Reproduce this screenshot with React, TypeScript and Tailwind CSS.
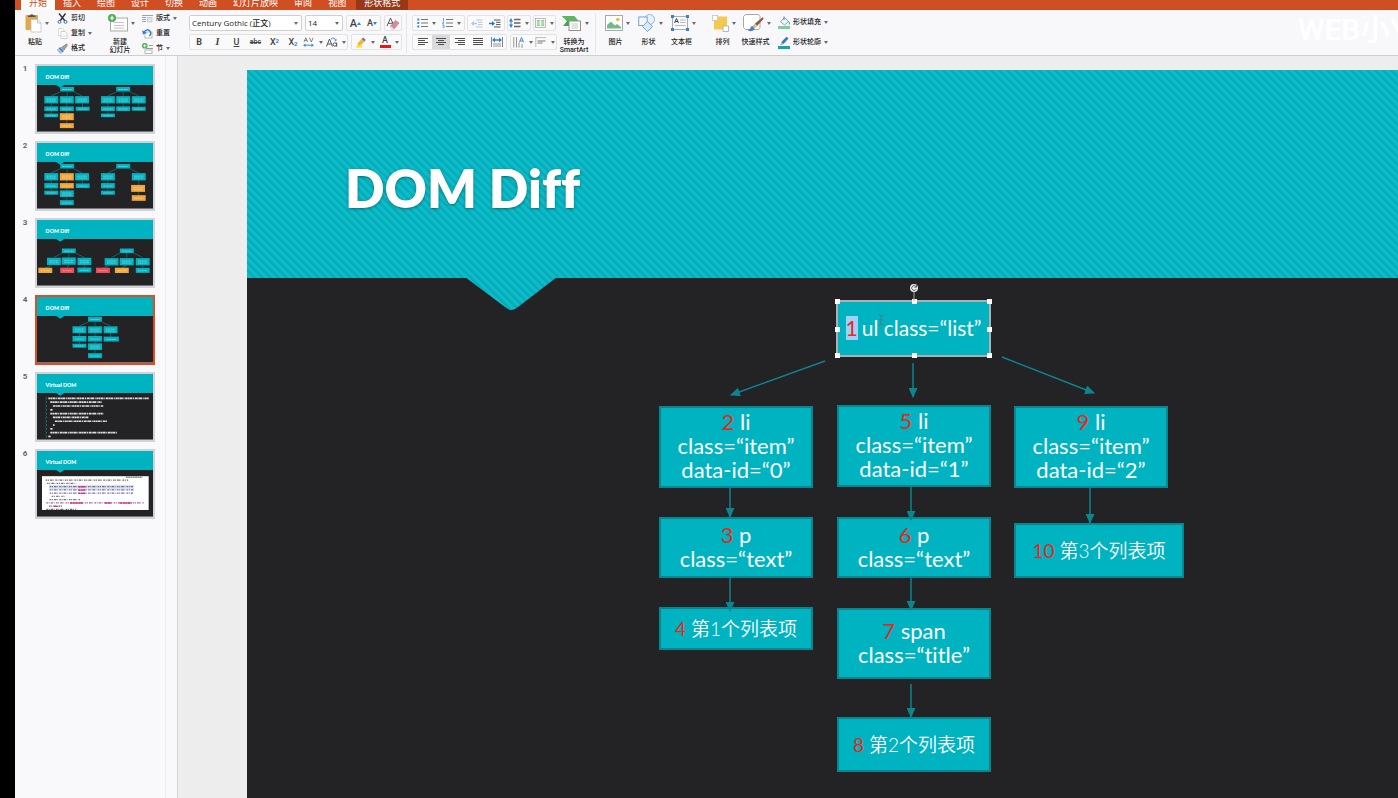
import type { ReactNode } from "react";

const TEAL = "#00b3c1";
const EDGE = "#0b858e";

function Caret({ className = "" }: { className?: string }) {
  return (
    <svg viewBox="0 0 4 3" className={"h-[3px] w-1 shrink-0 " + className} aria-hidden="true">
      <path d="M0 0h4L2 3z" fill="#6b6b6b" />
    </svg>
  );
}

function Icon({ w, h, children }: { w: number; h: number; children: ReactNode }) {
  return (
    <svg width={w} height={h} viewBox={`0 0 ${w} ${h}`} fill="none" className="shrink-0" aria-hidden="true">
      {children}
    </svg>
  );
}

/* ---------- ribbon icons ---------- */

const PasteIcon = () => (
  <Icon w={17} h={20}>
    <rect x="0.5" y="2" width="12.5" height="15" rx="1" fill="#e0a94f" />
    <path d="M3 4V2.500h2A2 2 0 0 1 8.600 2.500h2V4z" fill="#555" />
    <path d="M6 6.500h6.500L16 10v9H6z" fill="#fff" stroke="#bbb" strokeWidth=".7" />
    <path d="M12.500 6.500V10H16" stroke="#aaa" strokeWidth=".7" />
  </Icon>
);
const CutIcon = () => (
  <Icon w={11} h={11}>
    <path d="M2 0.500 8 8M8.500 0.500 3 8" stroke="#333" strokeWidth="1.400" />
    <circle cx="2.500" cy="8.800" r="1.500" stroke="#3a6fae" />
    <circle cx="8.500" cy="8.800" r="1.500" stroke="#3a6fae" />
  </Icon>
);
const CopyIcon = () => (
  <Icon w={11} h={11}>
    <path d="M1.500.5h4L7 2v5.500H1.500z" fill="#fff" stroke="#c9c9c9" strokeWidth=".7" />
    <path d="M4 3.500h4l2 2v5H4z" fill="#fff" stroke="#bdbdbd" strokeWidth=".7" />
    <path d="M5.500 7h3M5.500 8.500h3" stroke="#ccc" strokeWidth=".6" />
  </Icon>
);
const BrushIcon = () => (
  <Icon w={11} h={11}>
    <path d="M1 5.500 5 9.500 4 11C2 10.500.5 8.500 0 6.500z" fill="#9ec3e6" />
    <path d="M3 4 7 8 5.300 9.500 1.500 5.500z" fill="#4f86bd" />
    <path d="M4.500 4.500 7 7 10.500 2 9.500 1z" fill="#a6a6a6" stroke="#666" strokeWidth=".6" />
  </Icon>
);
const NewSlideIcon = () => (
  <Icon w={20} h={19}>
    <rect x="2.500" y="4" width="17" height="13" fill="#fff" stroke="#a9a9a9" />
    <path d="M6 8.500h10M6 11.500h10M6 14h10" stroke="#c4c4c4" />
    <circle cx="4" cy="4" r="4" fill="#4caf50" />
    <path d="M4 1.800v4.400M1.800 4h4.400" stroke="#fff" strokeWidth="1.200" />
  </Icon>
);
const LayoutIcon = () => (
  <Icon w={11} h={9}>
    <path d="M0 1.500h11M0 3.500h4M0 5.500h4M0 7.500h4" stroke="#9aa3ad" />
    <rect x="5.500" y="3.500" width="4.500" height="4.500" fill="#dfe5ec" stroke="#b9c2cc" strokeWidth=".7" />
  </Icon>
);
const ResetIcon = () => (
  <Icon w={11} h={11}>
    <rect x="3" y="4" width="7" height="6" fill="#fff" stroke="#aaa" strokeWidth=".8" />
    <path d="M2 4.500C3 1.500 7 .5 8.500 4c.6 1.600 0 3-1.200 4" stroke="#2f80c8" strokeWidth="1.300" />
    <path d="M0 2.200 1 6.500 5 5z" fill="#2f80c8" />
  </Icon>
);
const SectionIcon = () => (
  <Icon w={11} h={11}>
    <path d="M7 2.500h4M4 5.500h7" stroke="#999" />
    <rect x="3" y="7" width="7" height="3.500" fill="#fff" stroke="#999" strokeWidth=".7" />
    <circle cx="2.800" cy="2.800" r="2.800" fill="#4caf50" />
    <path d="M2.800 1.200v3.200M1.200 2.800h3.200" stroke="#fff" strokeWidth=".9" />
  </Icon>
);
const EraserIcon = () => (
  <Icon w={14} h={13}>
    <path d="M1 9 4.500 1 8 9M2.200 6.300h4.600" stroke="#555" />
    <path d="M4.500 9 9.500 3.500 13 6 8 12H5.500z" fill="#d98a9b" stroke="#b8687a" strokeWidth=".6" />
    <path d="M4.500 9 8 12H5.500z" fill="#fff" />
  </Icon>
);
const SpacingIcon = () => (
  <Icon w={12} h={10}>
    <path d="M1 5 2.800.8 4.600 5M1.700 3.500h2.200M6.500.8 8.300 5l1.800-4.200" stroke="#666" strokeWidth=".8" />
    <path d="M1.500 8.200h8" stroke="#3b8ad8" />
    <path d="M0 8.200 2.500 6.500v3.400zM11 8.200 8.500 6.500v3.400z" fill="#3b8ad8" />
  </Icon>
);
const CaseIcon = () => (
  <Icon w={12} h={11}>
    <path d="M.5 9.500 3.500 2 6.500 9.500M1.500 7h4" stroke="#555" />
    <circle cx="8.800" cy="7.500" r="1.700" stroke="#555" />
    <path d="M10.700 5.500v4.200" stroke="#555" />
    <path d="M5 2.200C6.500.6 8.500.8 9.500 2.500" stroke="#3b8ad8" />
    <path d="M8 2.500h3L9.800 4.600z" fill="#3b8ad8" />
  </Icon>
);
const HighlightIcon = () => (
  <Icon w={12} h={11}>
    <path d="M1 9.500h6" stroke="#ffe04d" strokeWidth="2.500" />
    <path d="M2.500 6.500 6.500 2 9.500 4.500 5.500 8.500 3 8.500z" fill="#f0b63c" />
    <path d="M6.500 2 8.300.6 10.700 3 9.500 4.500z" fill="#777" />
  </Icon>
);

function ListIcon({ numbered = false }: { numbered?: boolean }) {
  return (
    <Icon w={11} h={10}>
      <path d="M4 1.500h7M4 5h7M4 8.500h7" stroke="#777" />
      {numbered ? (
        <path d="M1.500 0v3M.5 4h1.500L.5 6H2M.5 7.300H2v2.400H.5" stroke="#3b8ad8" strokeWidth=".8" />
      ) : (
        <path d="M.3 1.500h2M.3 5h2M.3 8.500h2" stroke="#3b8ad8" strokeWidth="1.800" />
      )}
    </Icon>
  );
}
function IndentIcon({ out = false }: { out?: boolean }) {
  return (
    <Icon w={12} h={9}>
      <path d="M5 1h6.500M7 3.300h4.500M7 5.600h4.500M5 8h6.500" stroke={out ? "#bcc4cc" : "#555"} />
      {out ? (
        <path d="M0 4.500 3 2v1.800h3v1.400H3V7z" fill="#a9cbec" />
      ) : (
        <path d="M6 4.500 3 2v1.800H0v1.400h3V7z" fill="#2478cc" />
      )}
    </Icon>
  );
}
const LineSpacingIcon = () => (
  <Icon w={12} h={10}>
    <path d="M5 1.500h6.500M5 5h6.500M5 8.500h6.500" stroke="#666" strokeWidth="1.300" />
    <path d="M2 2v6" stroke="#2f80d0" />
    <path d="M0 3.500 2 0l2 3.500zM0 6.500 2 10l2-3.500z" fill="#2f80d0" />
  </Icon>
);
const ColumnsIcon = () => (
  <Icon w={11} h={10}>
    <rect x=".5" y=".5" width="10" height="9" fill="#fff" stroke="#aaa" strokeWidth=".8" />
    <path d="M1.800 2.800h3M1.800 5h3M1.800 7.200h3M6.200 2.800h3M6.200 5h3M6.200 7.200h3" stroke="#5cb85c" strokeWidth="1.200" />
  </Icon>
);
function AlignIcon({ d }: { d: string }) {
  return (
    <Icon w={10} h={8}>
      <path d={d} stroke="#4d4d4d" strokeWidth="1" shapeRendering="crispEdges" />
    </Icon>
  );
}
const DistributeIcon = () => (
  <Icon w={12} h={10}>
    <path d="M.5 0v10M11.500 0v10" stroke="#888" />
    <path d="M2 7h8M2 9h8" stroke="#999" />
    <path d="M2 3h8" stroke="#2f80d0" strokeWidth="1.500" />
    <path d="M1 3 4 .5v5zM11 3 8 .5v5z" fill="#2f80d0" />
  </Icon>
);
const TextDirIcon = () => (
  <Icon w={12} h={11}>
    <path d="M.8 0v10.500M3.500 0v10.500M6 6v4.500M9 7v4" stroke="#8a8a8a" strokeWidth=".9" />
    <path d="M6.300 5.500 8.500.5l2.200 5M7 4h3" stroke="#2f80d0" strokeWidth=".9" />
  </Icon>
);
const TextAlignIcon = () => (
  <Icon w={12} h={10}>
    <path d="M.8 0v10M1 .6h10" stroke="#aaa" strokeWidth=".8" />
    <path d="M2.500 4h8M2.500 6h5" stroke="#777" />
  </Icon>
);
const SmartArtIcon = () => (
  <Icon w={20} h={17}>
    <path d="M0 1h12l4.500 5-4.500 5H1l4-5z" fill="#4f9f52" />
    <path d="M0 1h12l4.500 5H5z" fill="#5cb85f" />
    <rect x="7" y="6" width="11.500" height="9.500" fill="#fff" stroke="#8f8f8f" />
    <path d="M9.500 9h6.500M9.500 11h6.500M9.500 13h6.500" stroke="#b5b5b5" strokeWidth=".8" />
  </Icon>
);
const PictureIcon = () => (
  <Icon w={18} h={16}>
    <rect x=".5" y=".5" width="17" height="15" fill="#fff" stroke="#a8a8a8" />
    <path d="M2 13.500V10l4-3.500 4 4 2-1.500 4 3v1.500z" fill="#74b98a" />
    <circle cx="12.800" cy="4.600" r="1.800" fill="#f0b93a" />
  </Icon>
);
const ShapesIcon = () => (
  <Icon w={18} h={18}>
    <circle cx="11.500" cy="5.500" r="5" fill="#e9f2fb" stroke="#8fb8e4" />
    <rect x=".7" y="3" width="8.500" height="8.500" fill="#f4f8fd" stroke="#6fa3dc" />
    <path d="m9.500 7.500 5 5-5 5-5-5z" fill="#dceaf8" stroke="#6fa3dc" />
  </Icon>
);
const TextBoxIcon = () => (
  <Icon w={18} h={16}>
    <rect x="1.500" y="1.500" width="15" height="13" fill="#f7f9fc" stroke="#8e9cab" strokeWidth=".8" />
    <path d="m3.500 8 2-4.500 2 4.500M4.200 6.500h2.600" stroke="#333" strokeWidth=".9" />
    <path d="M9 5h5.500M9 7.500h5.500M4 10.500h10.500" stroke="#aaa" strokeWidth=".8" />
    <path d="M0 0h3v3H0zM15 0h3v3h-3zM0 13h3v3H0zM15 13h3v3h-3z" fill="#3f7fca" />
  </Icon>
);
const ArrangeIcon = () => (
  <Icon w={17} h={17}>
    <rect x="2" y="1.500" width="13" height="13" fill="#f6c84f" />
    <rect x=".5" y=".5" width="5" height="5" fill="#fff" stroke="#c4c4c4" strokeWidth=".8" />
    <rect x="11" y="11" width="5.500" height="5.500" fill="#fff" stroke="#aaa" strokeWidth=".8" />
  </Icon>
);
const StyleIcon = () => (
  <Icon w={21} h={18}>
    <path d="M2.500.5h13l1.500 2v11l-1.500 2h-13L.5 13.500v-11z" fill="#fff" stroke="#a8a8a8" />
    <path d="M20 3 12 9.500l2 2.500L20.500 5z" fill="#8b5a3c" />
    <path d="M12 9.500 9.500 12l2 2.500L14 12z" fill="#d7b98c" />
    <path d="M9.500 12C7 12.500 8 15.500 4.500 16c2 2 6.500 1.500 7-1.500z" fill="#4d7fc4" />
  </Icon>
);
const FillIcon = () => (
  <Icon w={12} h={13}>
    <path d="m2.500 5.500 4-4 4 4-4 3.500z" fill="#eef5fb" stroke="#6a9bc7" strokeWidth=".9" />
    <path d="M6 4V.5M10.500 5.500c1 1 1.200 2 .8 3" stroke="#3b78b5" strokeWidth=".9" />
    <path d="M0 11.500h12" stroke="#7fcf9c" strokeWidth="3" />
  </Icon>
);
const OutlineIcon = () => (
  <Icon w={12} h={13}>
    <path d="M2.500 9 3.500 6 8.500.8 10.500 2.500 5.500 8z" fill="#3478bd" />
    <path d="M2.500 9 3.500 6 5.500 8z" fill="#d9b98a" />
    <path d="M0 11.500h12" stroke="#10a5b4" strokeWidth="3" />
  </Icon>
);

/* ---------- ribbon building blocks ---------- */

function BigTool({ icon, lines, className }: { icon: ReactNode; lines: string[]; className: string }) {
  return (
    <button type="button" className={"flex shrink-0 flex-col items-center gap-[5px] " + className}>
      <span className="flex h-5 items-center gap-[3px] pl-[3px]">
        {icon}
        <Caret />
      </span>
      <span className="text-[7px] leading-[8px] whitespace-nowrap">
        {lines.map((l) => (
          <span key={l} className="block">
            {l}
          </span>
        ))}
      </span>
    </button>
  );
}

function SmallTool({ icon, label, caret }: { icon: ReactNode; label: string; caret?: boolean }) {
  return (
    <button type="button" className="flex h-[15px] items-center gap-[3px] text-[7px] leading-[15px] whitespace-nowrap">
      <span className="flex w-3 justify-center">{icon}</span>
      {label}
      {caret && <Caret />}
    </button>
  );
}

function Group({ children }: { children: ReactNode }) {
  return (
    <div className="flex h-4 shrink-0 items-center rounded-[2px] border border-[#e2e2e5] bg-[#fafafb]">{children}</div>
  );
}

function Cell({ label, className = "w-5", children, active, caret }: { label: string; className?: string; children: ReactNode; active?: boolean; caret?: boolean }) {
  return (
    <button
      type="button"
      aria-label={label}
      className={"flex h-full shrink-0 items-center justify-center gap-1 text-[10px] leading-none text-[#444] " + className + (active ? " bg-[#d9d9db]" : "")}
    >
      {children}
      {caret && <Caret />}
    </button>
  );
}

const Divider = () => <div className="h-10 w-px shrink-0 bg-[#e6e6e8]" />;

function Ribbon() {
  return (
    <div className="flex h-[46px] shrink-0 items-start border-b border-[#cfcfd1] bg-[#f8f8fa] pt-[3px] pl-1 font-medium text-[#222]">
      <BigTool icon={<PasteIcon />} lines={["粘贴"]} className="w-8" />
      <div className="-mt-[2px] ml-[5px] w-[46px] shrink-0">
        <SmallTool icon={<CutIcon />} label="剪切" />
        <SmallTool icon={<CopyIcon />} label="复制" caret />
        <SmallTool icon={<BrushIcon />} label="格式" />
      </div>
      <BigTool icon={<NewSlideIcon />} lines={["新建", "幻灯片"]} className="w-9" />
      <div className="-mt-[2px] ml-[3px] w-12 shrink-0">
        <SmallTool icon={<LayoutIcon />} label="版式" caret />
        <SmallTool icon={<ResetIcon />} label="重置" />
        <SmallTool icon={<SectionIcon />} label="节" caret />
      </div>

      <div className="flex w-[217px] shrink-0 flex-col gap-[3px] pt-[2px]">
        <div className="flex gap-[3px]">
          <span className="relative flex w-[113px] items-center">
            <select aria-label="字体" className="h-4 w-full appearance-none rounded-[2px] border border-[#cfcfd2] bg-white pl-[2px] font-['Open_Sans','Noto_Sans_CJK_SC',sans-serif] text-[8px] leading-none text-[#222]">
              <option>Century Gothic (正文)</option>
            </select>
            <Caret className="pointer-events-none absolute right-1" />
          </span>
          <span className="relative flex w-[38px] items-center">
            <select aria-label="字号" className="h-4 w-full appearance-none rounded-[2px] border border-[#cfcfd2] bg-white pl-[2px] font-['Open_Sans',sans-serif] text-[8px] leading-none text-[#222]">
              <option>14</option>
            </select>
            <Caret className="pointer-events-none absolute right-1" />
          </span>
          <Group>
            <Cell label="增大字号" className="w-[17px]">
              <span className="flex items-center text-[11px]">
                A
                <Icon w={4} h={3}>
                  <path d="M0 3h4L2 0z" fill="#2f80d0" />
                </Icon>
              </span>
            </Cell>
            <Cell label="减小字号" className="w-4">
              <span className="flex items-center text-[9px]">
                A
                <Icon w={4} h={3}>
                  <path d="M0 0h4L2 3z" fill="#2f80d0" />
                </Icon>
              </span>
            </Cell>
          </Group>
          <Group>
            <Cell label="清除格式" className="w-4">
              <EraserIcon />
            </Cell>
          </Group>
        </div>
        <div className="flex gap-[3px]">
          <Group>
            <Cell label="加粗" className="w-[18px]"><b className="text-[9px]">B</b></Cell>
            <Cell label="倾斜" className="w-[19px]"><i className="font-['Liberation_Serif',serif] font-bold">I</i></Cell>
            <Cell label="下划线" className="w-[19px]"><u className="text-[9px]">U</u></Cell>
            <Cell label="删除线" className="w-[19px]"><s className="text-[7px]">abc</s></Cell>
            <Cell label="上标" className="w-[19px]"><span className="flex text-[9px]">X<span className="text-[6px] font-bold text-[#2f80d0]">2</span></span></Cell>
            <Cell label="下标" className="w-[18px]"><span className="flex items-end text-[9px]">X<span className="text-[6px] font-bold text-[#2f80d0]">2</span></span></Cell>
            <Cell label="字符间距" className="w-[22px]" caret><SpacingIcon /></Cell>
            <Cell label="更改大小写" className="w-[23px]" caret><CaseIcon /></Cell>
          </Group>
          <Group>
            <Cell label="突出显示" className="w-[25px]" caret><HighlightIcon /></Cell>
            <Cell label="字体颜色" className="w-6" caret>
              <span className="flex flex-col items-center text-[9px]">
                A
                <span className="h-[3px] w-[11px] bg-[#f01414]" />
              </span>
            </Cell>
          </Group>
        </div>
      </div>

      <Divider />

      <div className="flex w-[149px] shrink-0 flex-col gap-[3px] pt-[2px] pl-[5px]">
        <div className="flex gap-[2px]">
          <Group>
            <Cell label="项目符号" className="w-[26px]" caret><ListIcon /></Cell>
            <Cell label="编号" className="w-[25px]" caret><ListIcon numbered /></Cell>
          </Group>
          <Group>
            <Cell label="减少缩进" className="w-[18px]"><IndentIcon out /></Cell>
            <Cell label="增加缩进" className="w-[18px]"><IndentIcon /></Cell>
          </Group>
          <Group>
            <Cell label="行距" className="w-[22px]" caret><LineSpacingIcon /></Cell>
          </Group>
          <Group>
            <Cell label="分栏" className="w-[21px]" caret><ColumnsIcon /></Cell>
          </Group>
        </div>
        <div className="flex gap-[3px]">
          <Group>
            <Cell label="左对齐" className="w-[19px]"><AlignIcon d="M0 .5h10M0 2.500h7M0 4.500h10M0 6.500h7" /></Cell>
            <Cell label="居中" className="w-[18px]" active><AlignIcon d="M0 .5h10M2 2.500h6M0 4.500h10M2 6.500h6" /></Cell>
            <Cell label="右对齐" className="w-[19px]"><AlignIcon d="M0 .5h10M3 2.500h7M0 4.500h10M3 6.500h7" /></Cell>
            <Cell label="两端对齐" className="w-[18px]"><AlignIcon d="M0 .5h10M0 2.500h10M0 4.500h10M0 6.500h10" /></Cell>
            <Cell label="分散对齐" className="w-[19px]"><DistributeIcon /></Cell>
          </Group>
          <Group>
            <Cell label="文字方向" className="w-[23px]" caret><TextDirIcon /></Cell>
            <Cell label="对齐文本" className="w-[22px]" caret><TextAlignIcon /></Cell>
          </Group>
        </div>
      </div>

      <BigTool icon={<SmartArtIcon />} lines={["转换为", "SmartArt"]} className="w-9" />
      <div className="w-[3px] shrink-0" />
      <Divider />
      <div className="ml-[3px] flex shrink-0">
        <BigTool icon={<PictureIcon />} lines={["图片"]} className="w-[33px]" />
        <BigTool icon={<ShapesIcon />} lines={["形状"]} className="w-[33px]" />
        <BigTool icon={<TextBoxIcon />} lines={["文本框"]} className="w-[33px]" />
      </div>
      <div className="ml-[10px] flex shrink-0">
        <BigTool icon={<ArrangeIcon />} lines={["排列"]} className="w-[29px]" />
        <BigTool icon={<StyleIcon />} lines={["快速样式"]} className="w-[37px]" />
      </div>
      <div className="ml-1 flex shrink-0 flex-col gap-[5px] pt-[2px]">
        <SmallTool icon={<FillIcon />} label="形状填充" caret />
        <SmallTool icon={<OutlineIcon />} label="形状轮廓" caret />
      </div>
    </div>
  );
}

/* ---------- thumbnails ---------- */

const FILL = { t: TEAL, o: "#f0a63c", r: "#ee4b57" };
type Mini = [x: number, y: number, w: number, h: number, c: "t" | "o" | "r"];
type Link = [x1: number, y1: number, x2: number, y2: number];
interface ThumbData {
  title: string;
  nodes?: Mini[];
  links?: Link[];
  code?: "dark" | "light";
}

const THUMBS: ThumbData[] = [
  {
    title: "DOM Diff",
    nodes: [
      [91, 70, 42, 14, "t"], [43, 102, 42, 22, "t"], [90, 102, 42, 22, "t"], [136, 102, 42, 22, "t"],
      [43, 129, 42, 14, "t"], [90, 129, 42, 14, "t"], [138, 129, 42, 12, "t"], [43, 149, 42, 11, "t"],
      [90, 153, 42, 21, "o"], [90, 180, 42, 15, "o"],
      [260, 70, 42, 14, "t"], [214, 102, 42, 22, "t"], [260, 102, 42, 22, "t"], [307, 102, 42, 22, "t"],
      [214, 129, 42, 14, "t"], [260, 129, 42, 14, "t"], [307, 129, 42, 12, "t"], [214, 149, 42, 11, "t"],
    ],
    links: [[70, 78, 43, 90], [91, 78, 91, 90], [112, 78, 136, 90], [43, 102, 43, 149], [90, 102, 90, 180], [137, 102, 137, 129], [240, 78, 214, 90], [260, 78, 260, 90], [281, 78, 307, 90], [214, 102, 214, 149], [260, 102, 260, 129], [307, 102, 307, 129]],
  },
  {
    title: "DOM Diff",
    nodes: [
      [91, 70, 42, 14, "t"], [43, 102, 42, 22, "t"], [90, 102, 42, 22, "o"], [136, 102, 42, 22, "t"],
      [43, 129, 42, 16, "t"], [90, 129, 42, 16, "o"], [138, 129, 42, 14, "t"], [43, 150, 42, 12, "t"],
      [90, 153, 42, 20, "t"], [90, 180, 42, 15, "t"],
      [260, 70, 42, 14, "t"], [214, 102, 42, 22, "t"], [307, 102, 42, 22, "t"],
      [214, 129, 42, 16, "t"], [214, 150, 42, 12, "t"], [305, 137, 42, 21, "o"], [307, 166, 42, 17, "o"],
    ],
    links: [[70, 78, 43, 90], [91, 78, 91, 90], [112, 78, 136, 90], [43, 102, 43, 149], [90, 102, 90, 180], [137, 102, 137, 129], [240, 78, 214, 90], [281, 78, 307, 90], [214, 102, 214, 149], [307, 102, 307, 166]],
  },
  {
    title: "DOM Diff",
    nodes: [
      [96, 93, 42, 14, "t"], [51, 125, 42, 22, "t"], [96, 124, 42, 22, "t"], [143, 125, 42, 22, "t"],
      [25, 152, 42, 16, "o"], [91, 152, 42, 16, "r"], [143, 151, 42, 15, "t"],
      [271, 93, 42, 14, "t"], [225, 126, 42, 22, "t"], [271, 126, 42, 22, "t"], [319, 126, 42, 22, "t"],
      [199, 152, 42, 16, "r"], [256, 152, 42, 16, "o"], [319, 152, 42, 15, "t"],
    ],
    links: [[75, 100, 51, 113], [96, 100, 96, 113], [117, 100, 143, 113], [45, 136, 25, 145], [96, 136, 91, 145], [143, 136, 143, 145], [250, 100, 225, 113], [271, 100, 271, 113], [292, 100, 319, 113], [220, 136, 199, 145], [271, 136, 256, 145], [319, 136, 319, 145]],
  },
  {
    title: "DOM Diff",
    nodes: [
      [175, 67, 42, 15, "t"], [128, 99, 42, 21, "t"], [175, 99, 42, 21, "t"], [222, 99, 42, 21, "t"],
      [128, 126, 42, 17, "t"], [175, 126, 42, 17, "t"], [224, 127, 46, 15, "t"], [128, 147, 42, 12, "t"],
      [175, 150, 42, 20, "t"], [175, 177, 42, 15, "t"],
    ],
    links: [[154, 76, 128, 87], [175, 76, 175, 87], [196, 76, 222, 87], [128, 99, 128, 147], [175, 99, 175, 177], [222, 99, 222, 127]],
  },
  { title: "Virtual DOM", code: "dark" },
  { title: "Virtual DOM", code: "light" },
];

const DARK_LINES: [number, number][] = [[34, 338], [40, 195], [48, 200], [40, 48], [40, 200], [48, 155], [54, 212], [48, 53], [40, 48], [40, 243], [34, 41]];
const LIGHT_LINES: [number, number, string][] = [
  [26, 275, "#444"], [30, 118, "#555"], [38, 290, "#4c4c8a"], [38, 292, "#4c4c8a"], [38, 290, "#4c4c8a"], [44, 85, "#666"], [38, 130, "#555"], [28, 322, "#8b3fa0"], [36, 78, "#444"], [28, 118, "#444"],
];

function Thumb({ data }: { data: ThumbData }) {
  return (
    <svg viewBox="0 0 350 198" className="block w-full" role="img" aria-label={data.title}>
      <rect width="350" height="198" fill="#232224" />
      <path d="M0 0h350v57H82L70 66 58 57H0z" fill={TEAL} />
      <text x="26" y="38" fontSize="16" fontWeight="900" fill="#fff" fontFamily="Lato, sans-serif">
        {data.title}
      </text>
      {data.links?.map(([a, b, c, d]) => (
        <path key={`${a}-${b}-${c}-${d}`} d={`M${a} ${b}L${c} ${d}`} stroke={EDGE} strokeWidth="2" />
      ))}
      {data.nodes?.map(([x, y, w, h, c]) => (
        <g key={`${x}-${y}`}>
          <rect x={x - w / 2} y={y - h / 2} width={w} height={h} fill={FILL[c]} />
          <path
            d={h > 18 ? `M${x - 14} ${y - 2}h28M${x - 14} ${y + 4}h28` : `M${x - 14} ${y + 1}h28`}
            stroke="#fff"
            strokeOpacity=".6"
            strokeWidth="2"
            strokeDasharray="5 1 3 1"
          />
        </g>
      ))}
      {data.code === "dark" &&
        DARK_LINES.map(([a, b], i) => (
          <g key={i}>
            <path d={`M26 ${70 + i * 11.5}l4 3.500-4 3.500`} stroke="#0fae9c" strokeWidth="2" fill="none" />
            <path d={`M${a} ${73.5 + i * 11.5}H${b}`} stroke="#fff" strokeOpacity=".85" strokeWidth="5" strokeDasharray="7 1 4 1 9 2 3 2" />
          </g>
        ))}
      {data.code === "light" && (
        <>
          <rect x="15" y="76" width="322" height="102" fill="#fff" />
          <path d="M268 79h50" stroke="#555" strokeWidth="3" strokeDasharray="6 1" />
          <rect x="36" y="102" width="256" height="14" fill="#dfe3ee" />
          {LIGHT_LINES.map(([a, b, c], i) => (
            <path key={i} d={`M${a} ${88 + i * 9.8}H${b}`} stroke={c} strokeOpacity=".8" strokeWidth="4" strokeDasharray="5 2 3 3 8 2 2 4" />
          ))}
          <path d="M124 108h22M124 118h22M124 128h22M100 157h40M205 157h20M250 157h36M54 167h10" stroke="#d0357b" strokeWidth="4" strokeDasharray="7 1" />
        </>
      )}
    </svg>
  );
}

/* ---------- slide ---------- */

interface NodeData {
  n: number;
  lines: string[];
  box: string;
  cjk?: boolean;
}

const NODES: NodeData[] = [
  { n: 2, lines: ["li", "class=“item”", "data-id=“0”"], box: "left-[412px] top-[336px] w-[154px] h-[82px]" },
  { n: 5, lines: ["li", "class=“item”", "data-id=“1”"], box: "left-[590px] top-[335px] w-[154px] h-[82px]" },
  { n: 9, lines: ["li", "class=“item”", "data-id=“2”"], box: "left-[767px] top-[336px] w-[154px] h-[82px]" },
  { n: 3, lines: ["p", "class=“text”"], box: "left-[412px] top-[447px] w-[154px] h-[61px]" },
  { n: 6, lines: ["p", "class=“text”"], box: "left-[590px] top-[447px] w-[154px] h-[61px]" },
  { n: 10, lines: ["第3个列表项"], box: "left-[767px] top-[453px] w-[170px] h-[55px]", cjk: true },
  { n: 4, lines: ["第1个列表项"], box: "left-[412px] top-[537px] w-[154px] h-[43px]", cjk: true },
  { n: 7, lines: ["span", "class=“title”"], box: "left-[590px] top-[538px] w-[154px] h-[71px]" },
  { n: 8, lines: ["第2个列表项"], box: "left-[590px] top-[647px] w-[154px] h-[55px]", cjk: true },
];

const ARROWS = [
  "M578 291 484 325", "M666 293V327", "M755 287 847 323", "M483 418V447", "M664 417V450", "M843 418V453", "M483 508V541", "M664 508V540", "M664 614V647",
];

const HANDLES = [
  "-left-[3px] -top-[3px]", "left-[74px] -top-[3px]", "-right-[3px] -top-[3px]",
  "-left-[3px] top-[25px]", "-right-[3px] top-[25px]",
  "-left-[3px] -bottom-[3px]", "left-[74px] -bottom-[3px]", "-right-[3px] -bottom-[3px]",
];

const NODE_TEXT = "leading-6 font-['Lato','Noto_Sans_CJK_SC',sans-serif] text-white [font-variant-ligatures:none]";

function Slide() {
  return (
    <section aria-label="幻灯片 4" className="relative flex-1 overflow-hidden bg-[#232224]">
      <svg className="absolute inset-x-0 top-0 h-[241px] w-full" aria-hidden="true">
        <defs>
          <pattern id="stripe" width="8" height="8" patternUnits="userSpaceOnUse">
            <rect width="8" height="8" fill="#10bac6" />
            <path d="M-2-2 10 10M-2 6 2 10M6-2l4 4" stroke="#00aebb" strokeWidth="2.600" />
          </pattern>
        </defs>
        <rect width="100%" height="208" fill="url(#stripe)" />
        <path d="M218 207H310L271 237Q264.500 243 258 237Z" fill="url(#stripe)" />
      </svg>
      <h1 className="relative flex h-[208px] items-center pt-7 pl-[98px] font-['Lato',sans-serif] text-[52px] leading-none font-extrabold text-white [font-variant-ligatures:none] [text-shadow:0_1px_3px_rgba(0,0,0,0.4)]">
        DOM Diff
      </h1>

      {NODES.map((node) => (
        <div
          key={node.n}
          className={
            "absolute flex flex-col items-center justify-center border-2 border-[#0b858e] bg-[#00b3c1] text-center whitespace-nowrap " +
            (node.cjk ? "text-[19px] font-[350] " : "pb-[2px] text-[22px] ") +
            NODE_TEXT +
            " " +
            node.box
          }
        >
          {node.lines.map((line, i) => (
            <span key={line}>
              {i === 0 && <span className="font-normal text-[#e8281e]">{node.n} </span>}
              {line}
            </span>
          ))}
        </div>
      ))}

      <svg className="pointer-events-none absolute top-0 left-0 h-[728px] w-[1151px]" aria-hidden="true">
        <defs>
          <marker id="head" markerWidth="10" markerHeight="9" refX="9" refY="4.500" orient="auto" markerUnits="userSpaceOnUse">
            <path d="M0 0 10 4.500 0 9z" fill={EDGE} />
          </marker>
        </defs>
        {ARROWS.map((d) => (
          <path key={d} d={d} stroke={EDGE} strokeWidth="1.500" fill="none" markerEnd="url(#head)" />
        ))}
      </svg>

      <div className={"absolute top-[230px] left-[589px] flex h-[57px] w-[155px] items-center justify-center border-2 border-[#a9b3b5] bg-[#00b3c1] pb-[2px] text-[21px] whitespace-nowrap " + NODE_TEXT}>
        <span className="mr-1 bg-[#9fd0f5] text-[#e8281e]">1</span>
        <span>ul class=“list”</span>
        {HANDLES.map((pos) => (
          <span key={pos} className={"absolute size-[5px] bg-white " + pos} />
        ))}
        <svg viewBox="0 0 10 18" className="absolute -top-[19px] left-[71px] h-[18px] w-[10px]" aria-hidden="true">
          <path d="M5 8v10" stroke="#aaa" />
          <circle cx="5" cy="5" r="4" fill="#eee" />
          <path d="M7 3.500A2.400 2.400 0 1 0 7.300 6M7.500 2v2.200H5.300" stroke="#555" strokeWidth=".9" fill="none" />
        </svg>
        <svg viewBox="0 0 6 12" className="absolute top-3 left-[40px] h-3 w-[6px]" aria-hidden="true">
          <path d="M.5.5 3 2 5.500.5M3 2v8M.5 11.500 3 10l2.500 1.500M1 6h4" stroke="#4b7f86" fill="none" />
        </svg>
      </div>
    </section>
  );
}

/* ---------- page ---------- */

const TABS = ["开始", "插入", "绘图", "设计", "切换", "动画", "幻灯片放映", "审阅", "视图"];

export default function App() {
  return (
    <div className="flex h-screen overflow-hidden bg-black font-['Roboto','Noto_Sans_CJK_SC',sans-serif]">
      <div className="w-[15px] shrink-0 bg-black" />
      <div className="relative flex min-w-0 flex-1 flex-col bg-[#ededee]">
        <nav className="flex h-[10px] shrink-0 items-end bg-[#cf4e22] pl-[6px] text-[9px] leading-[14px] text-white">
          {TABS.map((t, i) => (
            <button key={t} type="button" className={i === 0 ? "bg-[#fafafa] px-2 text-[#cf4e22]" : "px-2"}>
              {t}
            </button>
          ))}
          <button type="button" className="ml-[2px] bg-[#983818] px-2">
            形状格式
          </button>
        </nav>
        <Ribbon />
        <div className="flex min-h-0 flex-1">
          <aside className="flex w-[163px] shrink-0 border-r border-[#d4d4d6] bg-[#f9f9fb]">
            <ol className="flex w-[151px] flex-col gap-[7px] border-r border-[#eeeeef] pt-2">
              {THUMBS.map((t, i) => (
                <li key={i} className="flex h-[70px] items-start gap-[7px] pl-[7px]">
                  <span className="w-[6px] text-center text-[8px] leading-[10px] font-bold text-[#666]">{i + 1}</span>
                  <button
                    type="button"
                    className={
                      "w-[120px] border-2 " +
                      (i === 3 ? "border-[#dc4f26]" : "border-[#d2d3d6]")
                    }
                  >
                    <Thumb data={t} />
                  </button>
                </li>
              ))}
            </ol>
          </aside>
          <main className="flex min-w-0 flex-1 flex-col pt-[14px] pl-[69px]">
            <Slide />
          </main>
        </div>
        <div className="pointer-events-none absolute top-[12px] right-0 flex w-[100px] overflow-hidden text-[30px] leading-9 font-medium whitespace-nowrap text-white">
          WEB小Y
        </div>
      </div>
    </div>
  );
}
